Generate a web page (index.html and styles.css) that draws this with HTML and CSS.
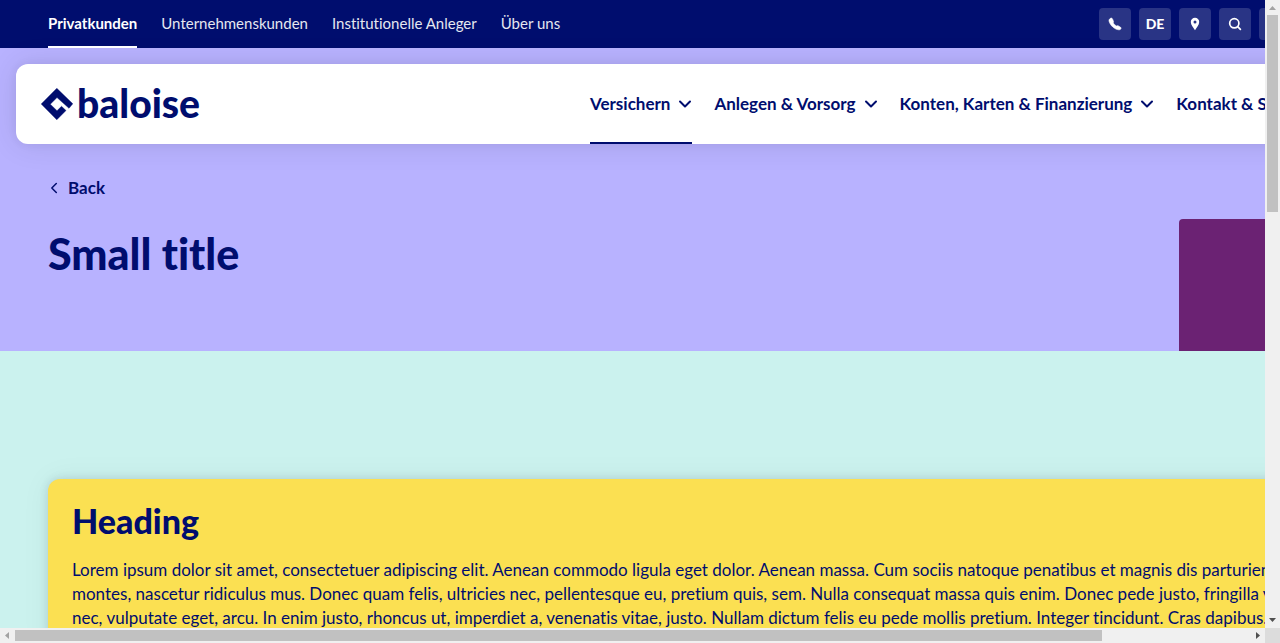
FILE: index.html
```
<!DOCTYPE html>
<html lang="de">
<head>
<meta charset="utf-8">
<title>Baloise</title>
<link rel="stylesheet" href="styles.css">
</head>
<body>
<div class="window">
  <div class="viewport">
    <div class="page">
      <header class="topbar">
        <nav class="topnav" aria-label="Bereiche">
          <a class="topnav-link is-active" href="#">Privatkunden</a>
          <a class="topnav-link" href="#">Unternehmenskunden</a>
          <a class="topnav-link" href="#">Institutionelle Anleger</a>
          <a class="topnav-link" href="#">Über uns</a>
        </nav>
        <div class="tools">
          <button class="tool" type="button" aria-label="Telefon">
            <svg width="16" height="16" viewBox="0 0 16 16"><path d="M3.600 2.300C2.500 2.800 1.900 3.800 2 5c.4 2 1.900 4.300 3.900 6.100 1.800 1.600 4 2.600 6 2.700 1.100 0 1.900-.5 2.100-1.300.1-.5 0-.9-.4-1.200l-2.200-1.400c-.6-.4-1.200-.3-1.700.2C8.600 9.600 6.800 8 6.200 6.800c.4-.4.5-.9.3-1.400L5.500 2.900c-.4-.7-1.100-1-1.900-.6z" fill="currentColor" stroke="currentColor" stroke-width=".6"/></svg>
          </button>
          <button class="tool" type="button">DE</button>
          <button class="tool" type="button" aria-label="Standort">
            <svg width="16" height="16" viewBox="0 0 16 16"><path fill-rule="evenodd" d="M8 1.800A4.200 4.200 0 0 0 3.800 6c0 3 2.700 5.500 4.200 8.200C9.500 11.500 12.200 9 12.200 6A4.200 4.200 0 0 0 8 1.800zm0 2.700a1.500 1.500 0 1 1 0 3 1.500 1.500 0 0 1 0-3z" fill="currentColor"/></svg>
          </button>
          <button class="tool" type="button" aria-label="Suche">
            <svg width="16" height="16" viewBox="0 0 16 16" fill="none" stroke="currentColor" stroke-width="1.700" stroke-linecap="round"><circle cx="7.300" cy="7.300" r="4.600"/><path d="M10.700 10.700l2.700 2.700"/></svg>
          </button>
          <button class="tool tool-wide" type="button" aria-label="Login"></button>
        </div>
      </header>

      <section class="hero">
        <div class="mainbar">
          <a class="logo" href="#">
            <svg width="32" height="32" viewBox="0 0 32 32" aria-hidden="true"><path d="M15.800 0.300L31.800 15.800L28 20.300L16 9.600L9.300 16.200L16 22.700L20.500 18.300L25 22.500L15.800 31.800L0.200 16z" fill="currentColor" stroke="currentColor" stroke-width=".4" stroke-linejoin="round"/></svg>
            <span class="wordmark">baloise</span>
          </a>
          <nav class="mainnav" aria-label="Hauptnavigation">
            <button class="mainnav-item is-active" type="button">Versichern
              <svg width="14" height="16" viewBox="0 0 14 16"><path d="M2 5.500L7 10.500L12 5.500"/></svg></button>
            <button class="mainnav-item" type="button">Anlegen &amp; Vorsorg
              <svg width="14" height="16" viewBox="0 0 14 16"><path d="M2 5.500L7 10.500L12 5.500"/></svg></button>
            <button class="mainnav-item" type="button">Konten, Karten &amp; Finanzierung
              <svg width="14" height="16" viewBox="0 0 14 16"><path d="M2 5.500L7 10.500L12 5.500"/></svg></button>
            <button class="mainnav-item" type="button">Kontakt &amp; Service
              <svg width="14" height="16" viewBox="0 0 14 16"><path d="M2 5.500L7 10.500L12 5.500"/></svg></button>
          </nav>
        </div>
        <div class="stage">
          <div class="stage-text">
            <a class="back" href="#"><svg width="12" height="12" viewBox="0 0 12 12"><path d="M8.300 1.500L3.800 6L8.300 10.500"/></svg>Back</a>
            <h1 class="title">Small title</h1>
          </div>
          <div class="stage-image"></div>
        </div>
      </section>

      <main class="content">
        <article class="card">
          <h2 class="heading">Heading</h2>
          <p class="copy">Lorem ipsum dolor sit amet, consectetuer adipiscing elit. Aenean commodo ligula eget dolor. Aenean massa. Cum sociis natoque penatibus et magnis dis parturient<br>
          montes, nascetur ridiculus mus. Donec quam felis, ultricies nec, pellentesque eu, pretium quis, sem. Nulla consequat massa quis enim. Donec pede justo, fringilla vel, aliquet<br>
          nec, vulputate eget, arcu. In enim justo, rhoncus ut, imperdiet a, venenatis vitae, justo. Nullam dictum felis eu pede mollis pretium. Integer tincidunt. Cras dapibus.</p>
        </article>
      </main>
    </div>
  </div>

  <div class="scrollbar vertical" aria-hidden="true">
    <svg width="15" height="15" viewBox="0 0 15 15"><path d="M4 10L7.500 6L11 10z" fill="#a3a3a3"/></svg>
    <div class="track"><div class="thumb"></div></div>
    <svg width="15" height="15" viewBox="0 0 15 15"><path d="M4 5L11 5L7.500 9z" fill="#505050"/></svg>
  </div>
  <div class="scrollbar horizontal" aria-hidden="true">
    <svg width="15" height="15" viewBox="0 0 15 15"><path d="M9 4L9 11L5 7.500z" fill="#a3a3a3"/></svg>
    <div class="track"><div class="thumb"></div></div>
    <svg width="15" height="15" viewBox="0 0 15 15"><path d="M6 4L10 7.500L6 11z" fill="#505050"/></svg>
  </div>
  <div class="corner"></div>
</div>
</body>
</html>
```
FILE: styles.css
```
* { box-sizing: border-box; }

body {
  margin: 0;
  color: #000d6e;
  font-family: Lato, "Open Sans", sans-serif;
  font-size: 17px;
  font-variant-ligatures: none;
  line-height: 24px;
}

a { color: inherit; text-decoration: none; }

button {
  padding: 0;
  border: 0;
  background: none;
  color: inherit;
  font: inherit;
  cursor: pointer;
}

svg { display: block; flex: none; }

.window {
  display: grid;
  grid-template-columns: minmax(0, 1fr) 15px;
  grid-template-rows: minmax(0, 1fr) 15px;
  height: 100vh;
}

.viewport { overflow: hidden; background: #cbf2ee; }
.page { min-width: 1440px; }

/* Top bar */
.topbar {
  display: flex;
  justify-content: space-between;
  align-items: center;
  height: 48px;
  padding: 0 48px;
  background: #000d6e;
  color: #fff;
}

.topnav { display: flex; gap: 24px; font-size: 15px; }

.topnav-link {
  height: 48px;
  padding-top: 11px;
  border-bottom: 2px solid transparent;
  color: #e5e7f0;
}

.topnav-link.is-active {
  border-color: #fff;
  color: #fff;
  font-weight: 700;
}

.tools { display: flex; gap: 8px; }

.tool {
  display: flex;
  justify-content: center;
  align-items: center;
  width: 32px;
  height: 32px;
  border-radius: 4px;
  background: #293485;
  font-size: 14px;
  font-weight: 900;
}

.tool-wide { width: 133px; }

/* Hero */
.hero { padding-top: 16px; background: #b8b2ff; }

.mainbar {
  display: flex;
  height: 80px;
  margin: 0 16px;
  padding: 0 25px;
  border-radius: 12px;
  background: #fff;
  box-shadow: 0 0 30px rgba(20, 20, 20, 0.1), 0 0 10px rgba(0, 7, 57, 0.06);
}

.logo {
  display: flex;
  align-items: center;
  gap: 4px;
  width: 160px;
}

.wordmark {
  padding-bottom: 2px;
  font-size: 39px;
  font-weight: 900;
  line-height: 40px;
}

.mainnav {
  display: flex;
  gap: 22px;
  margin-left: 389px;
  font-weight: 700;
  white-space: nowrap;
}

.mainnav-item {
  display: flex;
  align-items: center;
  gap: 8px;
  border-top: 2px solid transparent;
  border-bottom: 2px solid transparent;
}

.mainnav-item.is-active { border-bottom-color: #000d6e; }

.mainnav-item path,
.back path {
  fill: none;
  stroke: currentColor;
  stroke-width: 2;
  stroke-linecap: round;
  stroke-linejoin: round;
}

.back path { stroke-width: 1.5; }

.stage {
  display: flex;
  justify-content: space-between;
  align-items: flex-end;
  height: 207px;
  padding: 0 48px;
}

.stage-text { align-self: flex-start; padding-top: 32px; }

.back {
  display: flex;
  align-items: center;
  gap: 8px;
  font-weight: 700;
}

.title {
  margin: 30px 0 0;
  font-size: 43px;
  font-weight: 900;
  line-height: 48px;
}

.stage-image {
  width: 213px;
  height: 132px;
  border-radius: 4px 4px 0 0;
  background: #6b2273;
}

/* Content */
.content { padding: 128px 48px; }

.card {
  padding: 22px 24px 24px;
  border-radius: 12px;
  background: #fbe052;
  box-shadow: 0 0 30px rgba(20, 20, 20, 0.06), 0 0 10px rgba(0, 7, 57, 0.12);
}

.heading {
  margin: 0 0 17px;
  font-size: 34px;
  font-weight: 900;
  line-height: 40px;
}

.copy { margin: 0; white-space: nowrap; }

/* Scrollbars */
.scrollbar { display: flex; background: #f0f0f0; }
.vertical { flex-direction: column; }
.track { display: flex; flex: 1; }
.vertical .track { padding: 0 2px; }
.horizontal .track { padding: 2px 0; }
.thumb { background: #c1c1c1; }
.vertical .thumb { width: 100%; height: 33%; }
.horizontal .thumb { width: 88%; }
.corner { background: #dcdcdc; }
```
